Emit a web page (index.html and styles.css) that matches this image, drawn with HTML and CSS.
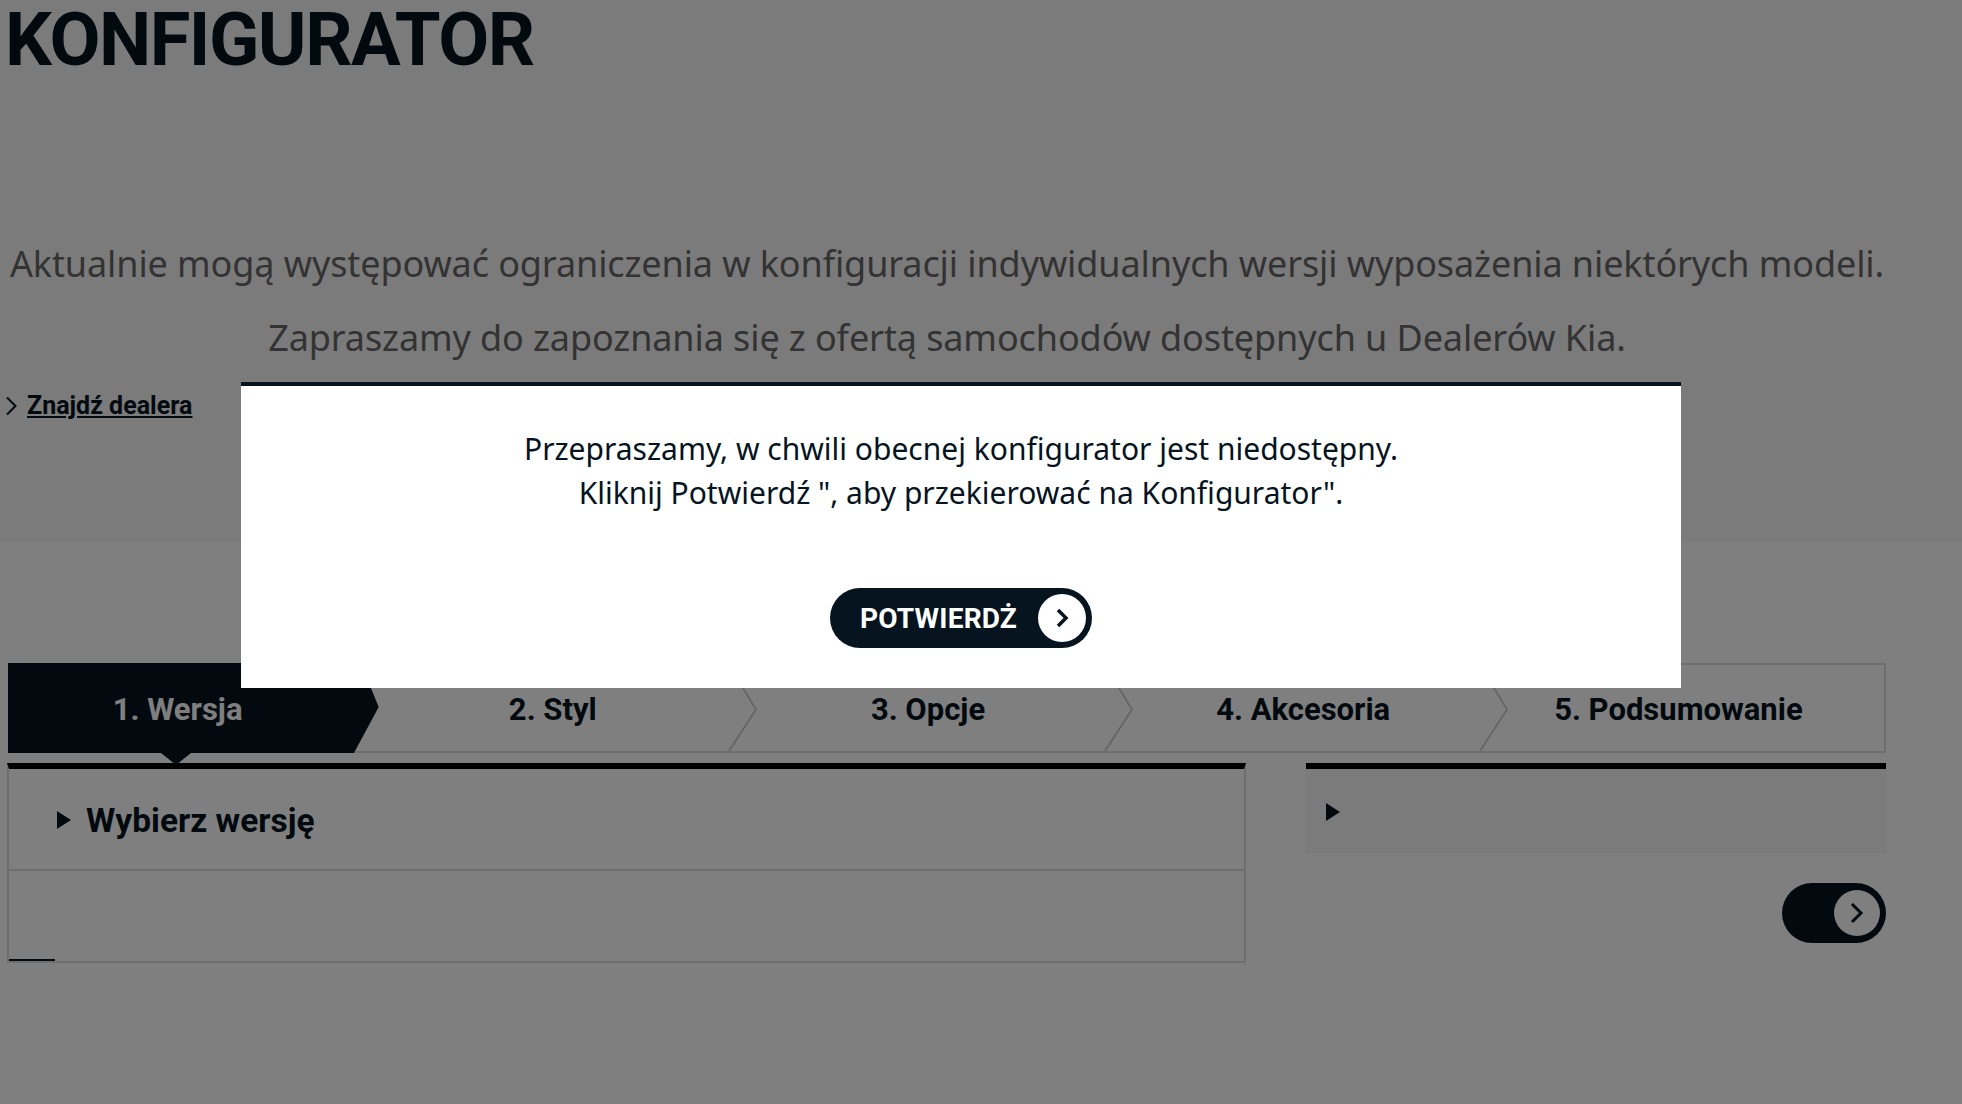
FILE: index.html
```html
<!DOCTYPE html>
<html lang="pl">
<head>
    <meta charset="UTF-8">
    <meta name="viewport" content="width=device-width, initial-scale=1.0">
    <title>Konfigurator</title>
    <link rel="stylesheet" href="styles.css">
</head>
<body>
    <section class="hero">
        <h1>KONFIGURATOR</h1>
        <div class="notice">
            <p>Aktualnie mogą występować ograniczenia w konfiguracji indywidualnych wersji wyposażenia niektórych modeli.</p>
            <p>Zapraszamy do zapoznania się z ofertą samochodów dostępnych u Dealerów Kia.</p>
        </div>
        <a class="dealer-link" href="#">
            <svg width="13" height="20" viewBox="0 0 13 20"><path d="M2 1.5 10.5 10 2 18.5" fill="none" stroke="#05141f" stroke-width="2"/></svg>
            <span>Znajdź dealera</span>
        </a>
    </section>

    <nav class="steps">
        <div class="step active">1. Wersja</div>
        <div class="step">2. Styl<svg class="chevron" viewBox="0 0 32 87" preserveAspectRatio="none"><path d="M1 0 28 45 1 87" fill="none" stroke="#cfcfcf" stroke-width="2"/></svg></div>
        <div class="step">3. Opcje<svg class="chevron" viewBox="0 0 32 87" preserveAspectRatio="none"><path d="M1 0 28 45 1 87" fill="none" stroke="#cfcfcf" stroke-width="2"/></svg></div>
        <div class="step">4. Akcesoria<svg class="chevron" viewBox="0 0 32 87" preserveAspectRatio="none"><path d="M1 0 28 45 1 87" fill="none" stroke="#cfcfcf" stroke-width="2"/></svg></div>
        <div class="step">5. Podsumowanie</div>
    </nav>

    <main class="columns">
        <section class="versions">
            <h2 class="versions-title"><span class="arrow"></span>Wybierz wersję</h2>
            <div class="versions-body"><span class="scroll-thumb"></span></div>
        </section>
        <aside class="summary">
            <div class="summary-box"><span class="arrow"></span></div>
            <a class="next-btn" href="#">
                <span class="btn-circle">
                    <svg width="16" height="22" viewBox="0 0 16 22"><path d="M3 2 12 11 3 20" fill="none" stroke="#05141f" stroke-width="3"/></svg>
                </span>
            </a>
        </aside>
    </main>

    <div class="overlay"></div>
    <div class="modal">
        <p>Przepraszamy, w chwili obecnej konfigurator jest niedostępny.<br>Kliknij Potwierdź ", aby przekierować na Konfigurator".</p>
        <a class="confirm-btn" href="#">
            <span class="confirm-label">POTWIERDŻ</span>
            <span class="btn-circle">
                <svg width="14" height="20" viewBox="0 0 14 20"><path d="M3 2 11 10 3 18" fill="none" stroke="#05141f" stroke-width="3.5"/></svg>
            </span>
        </a>
    </div>
</body>
</html>
```

FILE: styles.css
```css
* {
    box-sizing: border-box;
}

html, body {
    height: 100%;
}

body {
    font-family: "Noto Sans", Arial, sans-serif;
    color: #05141f;
    background: #ffffff;
    margin: 0;
    overflow: hidden;
}

.hero {
    height: 542px;
    background: #f7f7f7;
    padding: 0 76px 0 8px;
}

h1 {
    font-family: Roboto, Arial, sans-serif;
    font-size: 74px;
    line-height: 79px;
    font-weight: 700;
    letter-spacing: -1.5px;
    margin: 0 0 0 -3px;
    height: 79px;
}

.notice {
    margin-top: 161px;
    text-align: center;
    color: #666666;
    font-size: 36px;
    letter-spacing: -0.1px;
}

.notice p {
    margin: 0 0 26px;
    line-height: 48px;
}

.dealer-link {
    display: inline-flex;
    align-items: center;
    gap: 9px;
    color: #05141f;
    font-family: Roboto, Arial, sans-serif;
    font-size: 25px;
    font-weight: 700;
    margin-top: 3px;
    margin-left: -3px;
}

.dealer-link span {
    text-decoration: underline;
}

.steps {
    display: flex;
    margin: 121px 76px 0 8px;
    height: 90px;
    border: 2px solid #dddddd;
    border-left: 0;
}

.step {
    position: relative;
    flex: 1;
    display: flex;
    align-items: center;
    justify-content: center;
    padding: 2px 36px 0 0;
    font-family: Roboto, Arial, sans-serif;
    font-size: 31px;
    font-weight: 700;
}

.step.active {
    color: #ffffff;
    margin: -2px 0;
    z-index: 0;
}

.step.active::before {
    content: "";
    position: absolute;
    inset: 0;
    z-index: -1;
    background: #05141f;
    clip-path: polygon(0 0, 94% 0, 98.8% 49%, 92.2% 100%, 0 100%);
}

.step.active::after {
    content: "";
    position: absolute;
    left: 153px;
    top: 100%;
    border-top: 12px solid #05141f;
    border-left: 15px solid transparent;
    border-right: 15px solid transparent;
}

.chevron {
    position: absolute;
    right: -2px;
    top: 0;
    width: 32px;
    height: 100%;
}

.columns {
    display: flex;
    justify-content: space-between;
    margin: 10px 76px 0 7px;
}

.versions {
    width: 1239px;
    height: 200px;
    border: 2px solid #dddddd;
    border-top: 6px solid #000000;
}

.versions-title {
    display: flex;
    align-items: center;
    gap: 15px;
    margin: 0;
    height: 102px;
    padding: 2px 0 0 48px;
    font-family: Roboto, Arial, sans-serif;
    font-size: 33.5px;
    font-weight: 700;
    border-bottom: 2px solid #dddddd;
}

.arrow {
    width: 0;
    height: 0;
    border-left: 14px solid #05141f;
    border-top: 9px solid transparent;
    border-bottom: 9px solid transparent;
}

.versions-body {
    position: relative;
    height: 90px;
}

.scroll-thumb {
    position: absolute;
    left: 0;
    bottom: 0;
    width: 46px;
    height: 2px;
    background: #05141f;
}

.summary {
    width: 580px;
    display: flex;
    flex-direction: column;
    align-items: flex-end;
}

.summary-box {
    width: 100%;
    height: 90px;
    background: #f7f7f7;
    border-top: 6px solid #000000;
    display: flex;
    align-items: center;
    padding: 2px 0 0 20px;
}

.next-btn {
    display: flex;
    align-items: center;
    justify-content: flex-end;
    width: 104px;
    height: 60px;
    margin-top: 30px;
    padding-right: 6px;
    background: #05141f;
    border-radius: 30px;
}

.next-btn .btn-circle {
    width: 46px;
    height: 46px;
}

.btn-circle {
    display: flex;
    align-items: center;
    justify-content: center;
    width: 48px;
    height: 48px;
    border-radius: 50%;
    background: #ffffff;
}

.overlay {
    position: fixed;
    inset: 0;
    background: rgba(0, 0, 0, 0.5);
}

.modal {
    position: fixed;
    left: 241px;
    top: 382px;
    width: 1440px;
    height: 306px;
    background: #ffffff;
    border-top: 4px solid #05141f;
    text-align: center;
    padding-top: 41px;
}

.modal p {
    margin: 0;
    font-size: 30px;
    line-height: 44px;
}

.confirm-btn {
    display: inline-flex;
    align-items: center;
    justify-content: space-between;
    width: 262px;
    height: 60px;
    margin-top: 73px;
    padding: 0 6px 0 30px;
    background: #05141f;
    border-radius: 30px;
    text-decoration: none;
}

.confirm-label {
    color: #ffffff;
    font-family: Roboto, Arial, sans-serif;
    font-size: 28px;
    font-weight: 700;
    letter-spacing: 0.2px;
}
```
